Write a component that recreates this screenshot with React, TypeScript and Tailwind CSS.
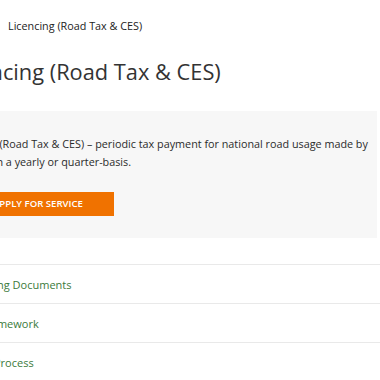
import React from "react";

const links = [
  { label: "Supporting Documents", shift: "-ml-[47px]" },
  { label: "Legal Framework", shift: "-ml-[49px]" },
  { label: "Process", shift: "-ml-[6px]" },
];

const App = () => {
  return (
    <div className="h-[380px] w-[380px] overflow-hidden bg-white font-['Open_Sans',sans-serif] text-[#333]">
      <div className="pl-[8px] pt-[17px] text-[10.8px] leading-[18px] text-[#222]">
        Licencing (Road Tax &amp; CES)
      </div>

      <h1 className="-ml-[50px] mt-[22px] whitespace-nowrap text-[21.8px] leading-[30px] text-[#333]">
        Licencing (Road Tax &amp; CES)
      </h1>

      <div className="mt-[24px] w-[377px] bg-[#f7f7f7] pb-[22px] pt-[24px]">
        <p className="-ml-[50px] whitespace-nowrap text-[10.8px] leading-[18px] text-[#2b2b2b]">
          Licencing (Road Tax &amp; CES) – periodic tax payment for national road usage made by
          <br />
          owners on a yearly or quarter-basis.
        </p>
        <button className="-ml-[23px] mt-[21px] flex h-[24px] w-[137px] items-center bg-[#f07200] pl-[16px] text-[9.6px] font-semibold text-white">
          APPLY FOR SERVICE
        </button>
      </div>

      <ul className="mt-[26px] border-t border-[#e9e9e9]">
        {links.map((l) => (
          <li key={l.label} className="flex h-[39px] items-center border-b border-[#e9e9e9] pt-[2px]">
            <span className={`${l.shift} whitespace-nowrap text-[11px] text-[#3b7a3b]`}>{l.label}</span>
          </li>
        ))}
      </ul>
    </div>
  );
};

export default App;
